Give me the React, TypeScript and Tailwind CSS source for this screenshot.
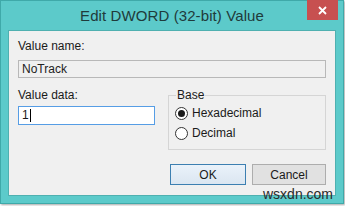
import { useState } from "react";

export default function App() {
  const [base, setBase] = useState<"hex" | "dec">("hex");

  return (
    <div
      className="relative w-[345px] h-[206px] bg-white overflow-hidden"
      style={{ fontFamily: '"Liberation Sans", Arial, sans-serif' }}
    >
      {/* window frame */}
      <div className="w-[344px] h-[204px] bg-[#5ccaca] border border-[#3fa9a9] flex flex-col shadow-[1px_1px_2px_rgba(0,0,0,0.35)]">
        <div className="relative h-[29px] flex items-center justify-center shrink-0">
          <span className="text-[15px] text-[#1f3b3b] pt-[2px] tracking-[0.1px]">Edit DWORD (32-bit) Value</span>
          <button className="absolute right-[5px] top-[-1px] w-[31px] h-[20px] bg-[#c75050] flex items-center justify-center">
            <svg width="9" height="9" viewBox="0 0 9 9">
              <path d="M1 1 L8 8 M8 1 L1 8" stroke="white" strokeWidth="1.8" />
            </svg>
          </button>
        </div>

        {/* client area */}
        <div className="mx-[7px] h-[166px] bg-[#f0f0f0] border border-[#4fb0b0] px-[9px] pt-[8px] text-[12px] leading-[14px] text-[#1a1a1a]">
          <div>Value name:</div>
          <div className="mt-[7px] h-[18px] border border-[#b8b8b8] bg-[#f0f0f0] px-[3px] leading-[16px] text-[#222]">
            NoTrack
          </div>

          <div className="mt-[10px] flex gap-[13px]">
            <div className="w-[137px]">
              <div>Value data:</div>
              <div className="mt-[4px] w-[137px] h-[19px] border border-[#569de5] bg-white px-[3px] leading-[17px] flex items-center">
                <span>1</span>
                <span className="ml-[1px] w-[1px] h-[13px] bg-black" />
              </div>
            </div>

            <fieldset className="w-[161px] h-[61px] border border-[#d5d5d5] px-[6px] pt-0 mt-[1px]">
              <legend className="px-[1px] ml-[1px] leading-[12px]">Base</legend>
              <div className="flex flex-col gap-[6px] mt-[5px]">
                <label className="flex items-center gap-[4px] cursor-pointer">
                  <Radio checked={base === "hex"} onClick={() => setBase("hex")} />
                  <span>Hexadecimal</span>
                </label>
                <label className="flex items-center gap-[4px] cursor-pointer">
                  <Radio checked={base === "dec"} onClick={() => setBase("dec")} />
                  <span>Decimal</span>
                </label>
              </div>
            </fieldset>
          </div>

          <div className="mt-[14px] flex justify-end gap-[6px]">
            <button className="w-[76px] h-[21px] border border-[#3c7fb1] bg-gradient-to-b from-[#eaf2fa] to-[#dbe6f1] text-[12px]">
              OK
            </button>
            <button className="w-[74px] h-[21px] border border-[#adadad] bg-[#e1e1e1] text-[12px]">
              Cancel
            </button>
          </div>
        </div>
      </div>

      <span className="absolute left-[263px] top-[186px] text-[14px] text-[#2b2b2b] leading-[16px]">
        wsxdn.com
      </span>
    </div>
  );
}

function Radio({ checked, onClick }: { checked: boolean; onClick: () => void }) {
  return (
    <span
      onClick={onClick}
      className="w-[13px] h-[13px] rounded-full border border-[#333] bg-white flex items-center justify-center"
    >
      {checked && <span className="w-[7px] h-[7px] rounded-full bg-[#1a1a1a]" />}
    </span>
  );
}
